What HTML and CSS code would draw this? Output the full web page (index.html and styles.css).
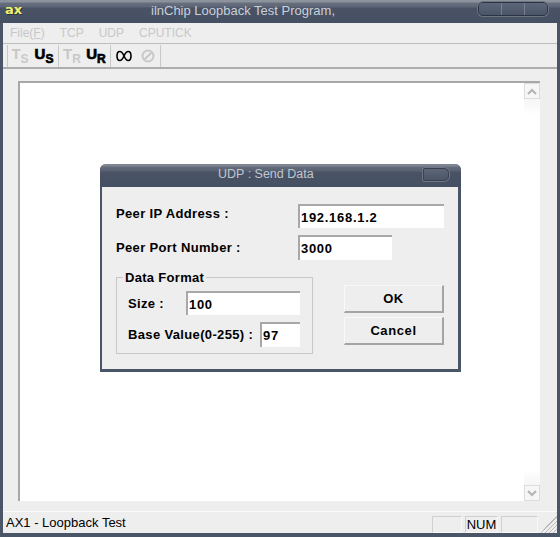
FILE: index.html
```html
<!DOCTYPE html>
<html lang="en">
<head>
	<meta charset="UTF-8">
	<title>ilnChip Loopback Test Program,</title>
	<link rel="stylesheet" href="styles.css">
</head>
<body>
	<div class="window">
		<div class="titlebar">
			<span class="logo">ax</span>
			<span class="title">ilnChip Loopback Test Program,</span>
			<div class="capbtns">
				<span class="capbtn"></span>
				<span class="capbtn"></span>
				<span class="capbtn"></span>
			</div>
		</div>
		<div class="menubar">
			<span class="menu">File(<u>F</u>)</span>
			<span class="menu">TCP</span>
			<span class="menu">UDP</span>
			<span class="menu">CPUTICK</span>
		</div>
		<div class="toolbar">
			<span class="sep sep-first"></span>
			<span class="tool off">T<sub>S</sub></span>
			<span class="tool on">U<sub>S</sub></span>
			<span class="sep"></span>
			<span class="tool off">T<sub>R</sub></span>
			<span class="tool on">U<sub>R</sub></span>
			<span class="sep"></span>
			<span class="tool glyph">
				<svg width="16" height="12" viewBox="0 0 16 12"><path d="M8 6C6.500 2.500 5 1.500 3.800 1.500 2 1.500 1 3.500 1 6s1 4.500 2.800 4.500C5 10.500 6.500 9.500 8 6c1.500-3.500 3-4.500 4.200-4.500C14 1.500 15 3.500 15 6s-1 4.500-2.800 4.500C11 10.500 9.500 9.500 8 6z" fill="none" stroke="#000" stroke-width="1.600"/></svg>
			</span>
			<span class="tool glyph">
				<svg width="14" height="14" viewBox="0 0 14 14"><circle cx="7" cy="7" r="5.500" fill="none" stroke="#c8c8c8" stroke-width="2"/><path d="M3.500 10.500l7-7" stroke="#c8c8c8" stroke-width="2"/></svg>
			</span>
			<span class="sep sep-last"></span>
		</div>
		<div class="client">
			<div class="view">
				<div class="scrollbar">
					<span class="arrow">
						<svg width="10" height="7" viewBox="0 0 10 7"><path d="M1 6l4-4 4 4" fill="none" stroke="#b4b4b4" stroke-width="2"/></svg>
					</span>
					<span class="arrow">
						<svg width="10" height="7" viewBox="0 0 10 7"><path d="M1 1l4 4 4-4" fill="none" stroke="#b4b4b4" stroke-width="2"/></svg>
					</span>
				</div>
			</div>
		</div>
		<div class="statusbar">
			<span class="status-text">AX1 - Loopback Test</span>
			<span class="pane pane-a"></span>
			<span class="pane pane-b">NUM</span>
			<span class="pane pane-c"></span>
			<span class="grip"></span>
		</div>
	</div>

	<div class="dialog">
		<div class="dialog-title">
			<span class="dialog-caption">UDP : Send Data</span>
			<span class="dialog-close"></span>
		</div>
		<div class="dialog-body">
			<div class="row row-ip">
				<label class="label label-peer">Peer IP Address :</label>
				<div class="input input-ip">192.168.1.2</div>
			</div>
			<div class="row row-port">
				<label class="label label-peer">Peer Port Number :</label>
				<div class="input input-port">3000</div>
			</div>
			<div class="lower">
				<fieldset class="group">
					<legend class="legend">Data Format</legend>
					<div class="row row-size">
						<label class="label label-size">Size :</label>
						<div class="input input-size">100</div>
					</div>
					<div class="row row-base">
						<label class="label label-base">Base Value(0-255) :</label>
						<div class="input input-base">97</div>
					</div>
				</fieldset>
				<div class="buttons">
					<div class="button">OK</div>
					<div class="button">Cancel</div>
				</div>
			</div>
		</div>
	</div>
</body>
</html>
```

FILE: styles.css
```css
html, body {
	margin: 0;
	padding: 0;
}
body {
	width: 560px;
	height: 537px;
	overflow: hidden;
	position: relative;
	background: #4b5568;
	font-family: "Liberation Sans", Arial, sans-serif;
	color: #000;
}
.window {
	width: 560px;
	height: 537px;
	box-sizing: border-box;
	padding: 0 3px 4px 3px;
	display: flex;
	flex-direction: column;
	background: #4b5568;
}

/* title bar */
.titlebar {
	height: 23px;
	margin: 0 -3px;
	padding: 0 12px 0 5px;
	display: flex;
	align-items: center;
	flex: none;
	box-sizing: border-box;
	background: linear-gradient(#8d939d 0, #8d939d 2px, #68707f 3px, #5c6575 7px, #4a5366 8px, #465063 100%);
}
.logo {
	color: #f2f26a;
	font: bold 13px "DejaVu Sans", sans-serif;
	line-height: 20px;
	width: 146px;
	margin-top: -3px;
	text-shadow: 1px 1px 0 #2c3443;
}
.title {
	color: #c9d0d9;
	font-size: 13px;
	white-space: nowrap;
	margin-top: -3px;
}
.capbtns {
	margin-left: auto;
	display: flex;
	height: 12px;
	margin-top: -5px;
	border: 1px solid #2c3443;
	border-radius: 5px;
	overflow: hidden;
	box-shadow: 0 0 0 1px #6d7583;
}
.capbtn {
	width: 22px;
	background: linear-gradient(#5d6778, #4a5568);
	border-left: 1px solid #77808e;
}
.capbtn:first-child {
	border-left: 0;
}

/* menu */
.menubar {
	height: 20px;
	flex: none;
	display: flex;
	align-items: center;
	gap: 15px;
	padding-left: 7px;
	background: #eeeeee;
	border-bottom: 1px solid #bdbdbd;
}
.menu {
	font-size: 12px;
	color: #c8c8c8;
}

/* toolbar */
.toolbar {
	height: 23px;
	flex: none;
	display: flex;
	align-items: center;
	background: #eeeeee;
	border-bottom: 2px solid #adadad;
	padding-left: 2px;
}
.tool {
	width: 24px;
	height: 23px;
	display: flex;
	justify-content: center;
	align-items: flex-start;
	padding-top: 4px;
	box-sizing: border-box;
	font-size: 15px;
	font-weight: bold;
	line-height: 12px;
}
.tool sub {
	font-size: 12px;
	line-height: 10px;
	margin-top: 6px;
	vertical-align: baseline;
}
.tool.off {
	color: #c8c8c8;
}
.tool.on {
	color: #000;
	-webkit-text-stroke: 0.7px #000;
}
.glyph {
	align-items: center;
	padding-top: 0;
}
.sep {
	width: 1px;
	height: 22px;
	background: #c8c8c8;
	margin: 0 1px 0 2px;
}
.sep-first {
	margin-right: 0;
}
.sep-last {
	margin-left: 0;
}

/* client area */
.client {
	flex: 1;
	min-height: 0;
	background: #eeeeee;
	padding: 12px 17px 10px 15px;
	display: flex;
}
.view {
	flex: 1;
	background: #fff;
	border-top: 2px solid #a8a8a8;
	border-left: 2px solid #a8a8a8;
	display: flex;
	justify-content: flex-end;
}
.scrollbar {
	width: 16px;
	display: flex;
	flex-direction: column;
	justify-content: space-between;
	background: linear-gradient(#ececec, #fff 32px, #fff calc(100% - 32px), #ececec);
}
.arrow {
	height: 16px;
	box-sizing: border-box;
	border: 1px solid #dcdcdc;
	background: #f6f6f6;
	display: flex;
	align-items: center;
	justify-content: center;
}

/* status bar */
.statusbar {
	height: 21px;
	flex: none;
	display: flex;
	align-items: stretch;
	background: #eeeeee;
	border-top: 1px solid #fafafa;
	font-size: 13px;
}
.status-text {
	margin-left: 3px;
	line-height: 22px;
	margin-right: auto;
}
.pane {
	box-sizing: border-box;
	border: 1px solid #d0d0d0;
	border-right-color: #f8f8f8;
	border-bottom-color: #f8f8f8;
	text-align: center;
	line-height: 16px;
	margin-right: 3px;
	margin-top: 4px;
}
.pane-a {
	width: 30px;
}
.pane-b {
	width: 33px;
}
.pane-c {
	width: 37px;
}
.grip {
	width: 16px;
	background: repeating-linear-gradient(135deg, #eeeeee 0, #eeeeee 2px, #bbbbbb 2px, #bbbbbb 3px);
	clip-path: polygon(100% 0, 100% 100%, 0 100%);
}

/* dialog over the window */
.dialog {
	position: absolute;
	left: 100px;
	top: 164px;
	width: 361px;
	height: 208px;
	box-sizing: border-box;
	background: #eeeeee;
	border: 3px solid #4b5568;
	border-top: 0;
	border-left-width: 2px;
	border-radius: 6px 6px 0 0;
	display: flex;
	flex-direction: column;
}
.dialog-title {
	height: 23px;
	flex: none;
	margin: 0 -3px 0 -2px;
	border-radius: 6px 6px 0 0;
	background: linear-gradient(#7f8692 0, #7f8692 2px, #646c7b 3px, #586172 7px, #4a5366 8px, #465063 100%);
	display: flex;
	align-items: center;
}
.dialog-caption {
	color: #bfc6d0;
	font-size: 12.500px;
	margin-left: 118px;
	margin-top: -3px;
}
.dialog-close {
	margin-left: auto;
	margin-right: 12px;
	margin-top: -3px;
	width: 24px;
	height: 11px;
	border: 1px solid #39414f;
	border-radius: 2px 5px 5px 2px;
	box-shadow: 0 0 0 1px #6f7785;
	background: linear-gradient(#5d6778, #4a5568);
}
.dialog-body {
	flex: 1;
	display: flex;
	flex-direction: column;
	padding: 17px 13px 0 14px;
}
.row {
	display: flex;
	align-items: center;
}
.row-ip {
	height: 24px;
}
.row-ip .label {
	padding-bottom: 6px;
}
.row-port {
	height: 25px;
	margin-top: 7px;
}
.label {
	font-size: 13px;
	font-weight: bold;
	letter-spacing: 0.35px;
	white-space: nowrap;
}
.label-peer {
	width: 182px;
}
.input {
	box-sizing: border-box;
	background: #fff;
	border-top: 2px solid #a8a8a8;
	border-left: 2px solid #a8a8a8;
	font-size: 13px;
	font-weight: bold;
	letter-spacing: 0.7px;
	padding-left: 1px;
	height: 100%;
	display: flex;
	align-items: center;
}
.input-ip {
	width: 146px;
}
.input-port {
	width: 94px;
}
.lower {
	display: flex;
	margin-top: 17px;
}
.group {
	width: 197px;
	height: 77px;
	box-sizing: border-box;
	margin: 0;
	padding: 0 12px 0 11px;
	border: 1px solid #c8c8c8;
	position: relative;
	min-inline-size: 0;
}
.legend {
	position: absolute;
	top: -7px;
	left: 6px;
	padding: 0 2px;
	background: #eeeeee;
	font-size: 13px;
	font-weight: bold;
	letter-spacing: 0.3px;
	line-height: 14px;
}
.row-size {
	height: 24px;
	margin-top: 13px;
}
.row-base {
	height: 25px;
	margin-top: 7px;
}
.label-size {
	width: 58px;
}
.label-base {
	width: 132px;
}
.input-size {
	width: 114px;
}
.input-base {
	width: 40px;
}
.buttons {
	margin-left: 31px;
	margin-top: 8px;
	display: flex;
	flex-direction: column;
	gap: 4px;
}
.button {
	width: 100px;
	height: 28px;
	box-sizing: border-box;
	border: 1px solid #f8f8f8;
	border-right: 2px solid #a4a4a4;
	border-bottom: 2px solid #a4a4a4;
	background: #eeeeee;
	font-size: 13px;
	font-weight: bold;
	letter-spacing: 0.6px;
	text-align: center;
	line-height: 25px;
}
```
